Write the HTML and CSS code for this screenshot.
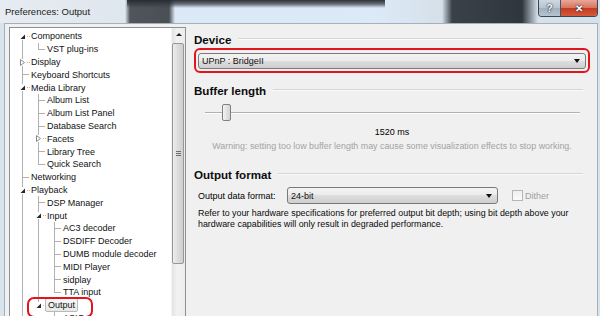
FILE: index.html
```html
<!DOCTYPE html>
<html lang="en">
<head>
    <meta charset="UTF-8">
    <title>Preferences: Output</title>
    <link rel="stylesheet" href="styles.css">
</head>
<body>
    <div class="window">
        <div class="titlebar">
            <span class="title">Preferences: Output</span>
            <div class="caption-btns">
                <span class="cap-btn help">?</span>
                <span class="cap-btn close">&#x2715;</span>
            </div>
        </div>

        <div class="client">
            <div class="tree">
                <div class="tree-items">
                    <div class="row"><i class="g e first"><svg viewBox="0 0 7 7"><path d="M6 1.5 L6 6 L1.5 6 Z" fill="#262626"/></svg></i><span class="label">Components</span></div>
                    <div class="row"><i class="g v"></i><i class="g l"></i><span class="label">VST plug-ins</span></div>
                    <div class="row"><i class="g c"><svg viewBox="0 0 7 7"><path d="M1.5 0.5 L5.5 3.5 L1.5 6.5 Z" fill="#fff" stroke="#8a8a8a" stroke-width="1"/></svg></i><span class="label">Display</span></div>
                    <div class="row"><i class="g t"></i><span class="label">Keyboard Shortcuts</span></div>
                    <div class="row"><i class="g e"><svg viewBox="0 0 7 7"><path d="M6 1.5 L6 6 L1.5 6 Z" fill="#262626"/></svg></i><span class="label">Media Library</span></div>
                    <div class="row"><i class="g v"></i><i class="g t"></i><span class="label">Album List</span></div>
                    <div class="row"><i class="g v"></i><i class="g t"></i><span class="label">Album List Panel</span></div>
                    <div class="row"><i class="g v"></i><i class="g t"></i><span class="label">Database Search</span></div>
                    <div class="row"><i class="g v"></i><i class="g c"><svg viewBox="0 0 7 7"><path d="M1.5 0.5 L5.5 3.5 L1.5 6.5 Z" fill="#fff" stroke="#8a8a8a" stroke-width="1"/></svg></i><span class="label">Facets</span></div>
                    <div class="row"><i class="g v"></i><i class="g t"></i><span class="label">Library Tree</span></div>
                    <div class="row"><i class="g v"></i><i class="g l"></i><span class="label">Quick Search</span></div>
                    <div class="row"><i class="g t"></i><span class="label">Networking</span></div>
                    <div class="row"><i class="g e"><svg viewBox="0 0 7 7"><path d="M6 1.5 L6 6 L1.5 6 Z" fill="#262626"/></svg></i><span class="label">Playback</span></div>
                    <div class="row"><i class="g v"></i><i class="g t"></i><span class="label">DSP Manager</span></div>
                    <div class="row"><i class="g v"></i><i class="g e"><svg viewBox="0 0 7 7"><path d="M6 1.5 L6 6 L1.5 6 Z" fill="#262626"/></svg></i><span class="label">Input</span></div>
                    <div class="row"><i class="g v"></i><i class="g v"></i><i class="g t"></i><span class="label">AC3 decoder</span></div>
                    <div class="row"><i class="g v"></i><i class="g v"></i><i class="g t"></i><span class="label">DSDIFF Decoder</span></div>
                    <div class="row"><i class="g v"></i><i class="g v"></i><i class="g t"></i><span class="label">DUMB module decoder</span></div>
                    <div class="row"><i class="g v"></i><i class="g v"></i><i class="g t"></i><span class="label">MIDI Player</span></div>
                    <div class="row"><i class="g v"></i><i class="g v"></i><i class="g t"></i><span class="label">sidplay</span></div>
                    <div class="row"><i class="g v"></i><i class="g v"></i><i class="g l"></i><span class="label">TTA input</span></div>
                    <div class="row marked"><i class="g v"></i><i class="g e end"><svg viewBox="0 0 7 7"><path d="M6 1.5 L6 6 L1.5 6 Z" fill="#262626"/></svg></i><span class="label selected">Output</span></div>
                    <div class="row"><i class="g v"></i><i class="g"></i><i class="g t"></i><span class="label">ASIO</span></div>
                </div>
                <div class="scrollbar">
                    <div class="sb-up"></div>
                    <div class="sb-thumb"><span class="grip"></span></div>
                </div>
            </div>

            <div class="panel">
                <div class="sec-title">Device</div>
                <div class="highlight">
                    <div class="combo"><span>UPnP : BridgeII</span><i class="arrow"></i></div>
                </div>

                <div class="sec-title buffer">Buffer length</div>
                <div class="slider"><span class="thumb"></span></div>
                <p class="value">1520 ms</p>
                <p class="warning">Warning: setting too low buffer length may cause some visualization effects to stop working.</p>

                <div class="sec-title format">Output format</div>
                <div class="format-row">
                    <span class="format-label">Output data format:</span>
                    <div class="combo small"><span>24-bit</span><i class="arrow"></i></div>
                    <label class="check"><span class="box"></span>Dither</label>
                </div>
                <p class="note">Refer to your hardware specifications for preferred output bit depth; using bit depth above your<br>hardware capabilities will only result in degraded performance.</p>
            </div>
        </div>
    </div>
</body>
</html>
```

FILE: styles.css
```css
* {
    margin: 0;
    padding: 0;
    box-sizing: border-box;
}

body {
    font-family: 'Liberation Sans', Arial, sans-serif;
    font-size: 9px;
    color: #000;
    background: #dbe6ef;
}

.window {
    width: 600px;
    height: 316px;
    overflow: hidden;
    background: #d8e3ec;
}

/* Title bar: glass with the blurred desktop behind it */
.titlebar {
    height: 23px;
    display: flex;
    justify-content: space-between;
    align-items: flex-start;
    background:
        linear-gradient(to bottom, rgba(38, 42, 48, 0.95) 0, rgba(50, 56, 62, 0.7) 4px, rgba(60, 66, 72, 0) 8px) 127px 0 / 258px 100% no-repeat,
        linear-gradient(to right, rgba(70, 74, 80, 0) 0, #50555b 5px, #4a4f55 44px, rgba(74, 79, 85, 0) 50px) 125px 0 / 52px 100% no-repeat,
        linear-gradient(to right, rgba(46, 52, 60, 0) 0, #3b4149 10px, #30363e 80px, rgba(48, 54, 62, 0) 96px) 442px 0 / 98px 100% no-repeat,
        linear-gradient(to right, #e6ecf1 0, #dfe7ee 120px, #dbe8f6 180px, #dce9f6 380px, #d5e0e9 440px, #d7e1ea 600px);
}

.title {
    padding: 6px 0 0 5px;
    font-size: 9.5px;
    color: #1b1b1b;
}

.caption-btns {
    display: flex;
    margin-right: 2px;
    border: 1px solid #39475a;
    border-top: none;
    border-radius: 0 0 4px 4px;
    overflow: hidden;
}

.cap-btn {
    height: 16px;
    display: flex;
    align-items: center;
    justify-content: center;
    color: #fff;
    font-weight: bold;
    text-shadow: 0 0 2px #1c2430, 0 0 1px #1c2430;
}

.cap-btn.help {
    width: 22px;
    font-size: 10px;
    border-right: 1px solid #4a5563;
    background: linear-gradient(#cfd8e1, #b6c3cf 50%, #9eafbf 50%, #b4c4d2);
}

.cap-btn.close {
    width: 36px;
    font-size: 10px;
    background: linear-gradient(#e9a899, #d6735f 50%, #c4391f 50%, #d45a3a);
}

.client {
    height: 293px;
    display: flex;
    margin: 0 2px 0 4px;
    padding: 3px 0 0 4px;
    background: #f0f0f0;
    border: 1px solid #a4b0bb;
    border-bottom: none;
}

/* Tree view */
.tree {
    width: 177px;
    height: 300px;
    display: flex;
    background: #fff;
    border: 1px solid #8c9198;
}

.tree-items {
    flex: 1;
    padding: 2px 0 0 4px;
    overflow: hidden;
}

.row {
    height: 12.8px;
    line-height: 12.8px;
    display: flex;
    align-items: center;
    white-space: nowrap;
    position: relative;
}

.g {
    width: 16px;
    height: 12.8px;
    flex: none;
    position: relative;
}

.g.v::before,
.g.t::before,
.g.l::before,
.g.e::before,
.g.c::before {
    content: "";
    position: absolute;
    left: 8px;
    top: 0;
    bottom: 0;
    border-left: 1px solid #b1b1b1;
}

.g.l::before {
    bottom: 6px;
}

.g.e.first::before {
    top: 6px;
}

.g.e.end::before {
    bottom: 6px;
}

.g.t::after,
.g.l::after {
    content: "";
    position: absolute;
    left: 9px;
    right: 1px;
    top: 6px;
    border-top: 1px solid #b1b1b1;
}

/* expander glyphs sit over the guide line */
.g svg {
    position: absolute;
    left: 5px;
    top: 3px;
    width: 7px;
    height: 7px;
    background: #fff;
}

.g.e::after,
.g.c::after {
    content: "";
    position: absolute;
    left: 13px;
    right: 0;
    top: 6px;
    border-top: 1px dotted #b8b8b8;
}

.label {
    padding: 0 1px;
    color: #111;
    line-height: 12px;
}

.label.selected {
    border: 1px solid #b9b9b9;
    border-radius: 2px;
    background: linear-gradient(#f8f8f8, #e8e8e8);
    padding: 0 2px;
    margin-left: -1px;
}

.row.marked::after {
    content: "";
    position: absolute;
    left: 13px;
    top: -2px;
    width: 62px;
    height: 17px;
    border: 2px solid #e3141b;
    border-radius: 7px;
}

.scrollbar {
    width: 14px;
    flex: none;
    background: linear-gradient(to right, #e4e4e4, #f2f2f2 40%, #ececec);
    border-left: 1px solid #f4f4f4;
}

.sb-up {
    height: 14px;
    position: relative;
}

.sb-up::after {
    content: "";
    position: absolute;
    left: 4px;
    top: 5px;
    border: 3px solid transparent;
    border-bottom: 3px solid #222;
    border-top: none;
}

.sb-thumb {
    height: 221px;
    margin: 1px 1px 0 0;
    border: 1px solid #979797;
    border-radius: 2px;
    background: linear-gradient(to right, #eeeeee, #dcdcdc 50%, #cfcfcf);
    display: flex;
    align-items: center;
    justify-content: center;
}

.grip {
    width: 5px;
    height: 5px;
    border-top: 1px solid #6e6e6e;
    border-bottom: 1px solid #6e6e6e;
    background: linear-gradient(#6e6e6e, #6e6e6e) center / 100% 1px no-repeat;
}

/* Right panel */
.panel {
    flex: 1;
    padding: 4.5px 7px 0 8px;
}

.sec-title {
    display: flex;
    align-items: center;
    gap: 7px;
    height: 15px;
    font-size: 11.6px;
    font-weight: bold;
    color: #0c0c0c;
}

.sec-title::after {
    content: "";
    flex: 1;
    margin-right: 7px;
    border-top: 1px solid #d2d6da;
    border-bottom: 1px solid #fbfbfb;
}

.sec-title.buffer {
    margin-top: 9.5px;
}

.sec-title.format {
    margin-top: 14.5px;
}

.highlight {
    margin-top: 1.5px;
    padding: 2.5px 2px;
    border: 2px solid #e3141b;
    border-radius: 6px;
}

.combo {
    height: 16px;
    display: flex;
    align-items: center;
    justify-content: space-between;
    padding: 0 5px 0 3px;
    border: 1px solid #7a7a7a;
    border-radius: 3px;
    background: linear-gradient(#f3f3f3, #ebebeb 50%, #dddddd 50%, #cfcfcf);
    color: #111;
}

.arrow {
    border: 3px solid transparent;
    border-top: 4px solid #111;
    border-bottom: none;
    margin-top: 1px;
}

.slider {
    height: 18px;
    margin: 6px 10px 0 11px;
    display: flex;
    align-items: center;
    background:
        linear-gradient(#b2b2b2, #b2b2b2) 0 8px / 100% 1px no-repeat,
        linear-gradient(#ffffff, #ffffff) 0 9px / 100% 1px no-repeat;
}

.thumb {
    width: 9px;
    height: 17px;
    margin-left: 17px;
    border: 1px solid #808080;
    border-radius: 2px;
    background: linear-gradient(to right, #f4f4f4, #e2e2e2 50%, #d4d4d4);
}

.value {
    margin-top: 4.5px;
    line-height: 12px;
    text-align: center;
}

.warning {
    margin-top: 2px;
    line-height: 12px;
    text-align: center;
    color: #a3a3a3;
    font-size: 8.9px;
}

.format-row {
    display: flex;
    align-items: center;
    margin-top: 5.5px;
    padding-left: 4px;
}

.format-label {
    width: 89px;
}

.combo.small {
    width: 211px;
    height: 17px;
    padding-right: 5px;
}

.check {
    display: flex;
    align-items: center;
    margin-left: 14px;
    color: #a0a0a0;
}

.box {
    width: 11px;
    height: 11px;
    margin-right: 2px;
    border: 1px solid #b6b6b6;
    background: linear-gradient(#f0f0f0, #fafafa);
}

.note {
    margin-top: 3.5px;
    padding-left: 4px;
    line-height: 11px;
    font-size: 8.9px;
    color: #0a0a0a;
}
```
